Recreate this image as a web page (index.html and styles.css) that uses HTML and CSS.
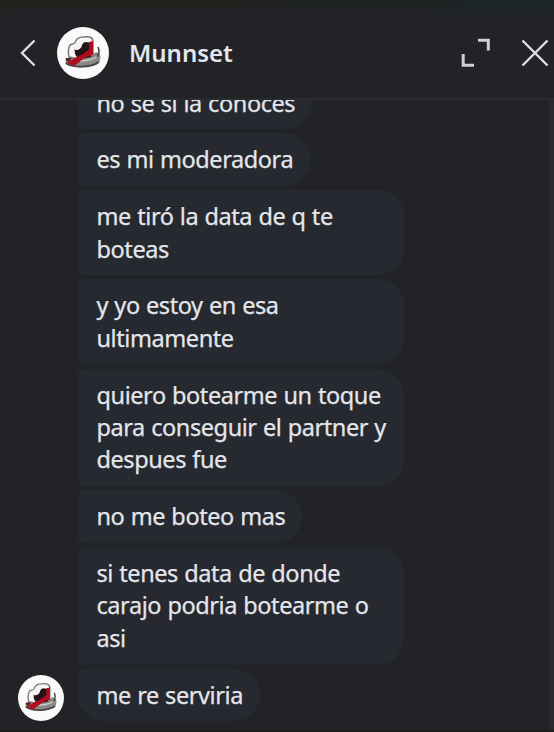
FILE: index.html
```html
<!DOCTYPE html>
<html lang="es">
<head>
<meta charset="utf-8">
<title>Munnset</title>
<link rel="stylesheet" href="styles.css">
</head>
<body>
<svg class="defs" aria-hidden="true">
  <symbol id="hat" viewBox="0 0 52 52">
    <circle cx="26" cy="26" r="26" fill="#fafafa"/>
    <path d="M9 34c1-3 4-4 7-4h17l6-5 4 2c1 5 0 9-4 11-7 3-23 3-29 0-2-1-2-3-1-4z" fill="#8b8888"/>
    <path d="M9 36c7 5 24 5 33-1" fill="none" stroke="#4a4647" stroke-width="2"/>
    <path d="M23 34c6 0 12-1 18-5" fill="none" stroke="#d6d3d2" stroke-width="1.300"/>
    <path d="M12 30c-1-4-1-8 1-12 2-1 4-1 5-2 1-4 4-6 8-6 6-1 10 0 10 5v14l-14 3z" fill="#f7f6f5" stroke="#7b7879" stroke-width="1.500"/>
    <path d="M18 20c1 3 4 2 7-2 1-2 2-3 4-3l5 1v14l-12 2c-4-3-5-7-4-12z" fill="#251416"/>
    <path d="M17 18c2-4 7-4 8-1 0 4-3 6-6 6-2 0-3-3-2-5z" fill="#f4f3f3"/>
    <path d="M32 15l4-1v14l-7 2-12 9-7-3 8-5 8-4 6-4z" fill="#b30c1e"/>
    <path d="M9 31l6 0-3 4c-3-1-4-2-3-4z" fill="#5b2025"/>
    <path d="M41 20c2 4 1 7-1 10" fill="none" stroke="#4a4748" stroke-width="1.600"/>
  </symbol>
</svg>
<div class="chat">
  <header class="header">
    <svg class="back" viewBox="0 0 16 28"><path d="M14.500 1.500 2 14l12.500 12.500"/></svg>
    <svg class="avatar"><use href="#hat"/></svg>
    <h1 class="name">Munnset</h1>
    <svg class="expand" viewBox="0 0 30 30"><path d="M17 2.200h10.300v10.300M2.200 16v11.300h10.800"/></svg>
    <svg class="close" viewBox="0 0 28 28"><path d="M1.500 1.500l25 25M26.500 1.500l-25 25"/></svg>
  </header>
  <main class="thread">
    <div class="messages">
      <p class="bubble">no se si la conoces</p>
      <p class="bubble">es mi moderadora</p>
      <p class="bubble">me tiró la data de q te boteas</p>
      <p class="bubble">y yo estoy en esa ultimamente</p>
      <p class="bubble">quiero botearme un toque para conseguir el partner y despues fue</p>
      <p class="bubble">no me boteo mas</p>
      <p class="bubble">si tenes data de donde carajo podria botearme o asi</p>
      <div class="last">
        <svg class="avatar small"><use href="#hat"/></svg>
        <p class="bubble">me re serviria</p>
      </div>
    </div>
    <div class="scrollbar"></div>
  </main>
</div>
</body>
</html>
```
FILE: styles.css
```css
* { box-sizing: border-box; }
body {
  margin: 0;
  height: 732px;
  padding-top: 9px;
  overflow: hidden;
  background: linear-gradient(90deg, #20231e 0%, #20231f 50%, #1c2528 100%);
  color: #e4e6eb;
  font-family: "Noto Sans", "Open Sans", sans-serif;
}
.defs { display: none; }
.chat {
  height: 723px;
  display: flex;
  flex-direction: column;
  background: #222327;
  border-top-left-radius: 9px;
  border-bottom: 2px solid #1d1c1f;
}
.header {
  flex: none;
  height: 91px;
  display: flex;
  align-items: center;
  padding: 0 5px 1px 20px;
  border-bottom: 2px solid #2a2b2e;
}
.header > svg path {
  fill: none;
  stroke: #dedfe2;
  stroke-width: 2.4;
}
.back { width: 16px; height: 28px; }
.avatar { flex: none; width: 52px; height: 52px; margin-left: 21px; }
.name {
  flex: 1;
  margin: 0 0 0 20px;
  font-size: 24px;
  font-weight: 600;
  line-height: 32px;
}
.expand { width: 30px; height: 30px; margin-right: 30px; }
.header > .expand path { stroke-width: 3; stroke: #cfd0d3; }
.close { width: 28px; height: 28px; }
.thread {
  flex: 1;
  min-height: 0;
  display: flex;
}
.messages {
  flex: 1;
  overflow: hidden;
  display: flex;
  flex-direction: column;
  justify-content: flex-end;
  align-items: flex-start;
  gap: 4.4px;
  padding: 0 0 9px 78px;
}
.bubble {
  flex: none;
  max-width: 326px;
  margin: 0;
  padding: 10px 17px 10px 18.5px;
  border-radius: 6px 26px 26px 6px;
  background: #26292f;
  font-size: 23.5px;
  -webkit-text-stroke: 0.25px #e4e6eb;
  line-height: 32.4px;
  letter-spacing: -0.42px;
  word-spacing: 0.6px;
}
.last {
  flex: none;
  display: flex;
  align-items: flex-end;
  margin-left: -60px;
}
.last .bubble { border-bottom-left-radius: 26px; }
.small { width: 46px; height: 46px; margin: 0 14px 0 0; }
.scrollbar { width: 5px; background: #292a2d; }
```
